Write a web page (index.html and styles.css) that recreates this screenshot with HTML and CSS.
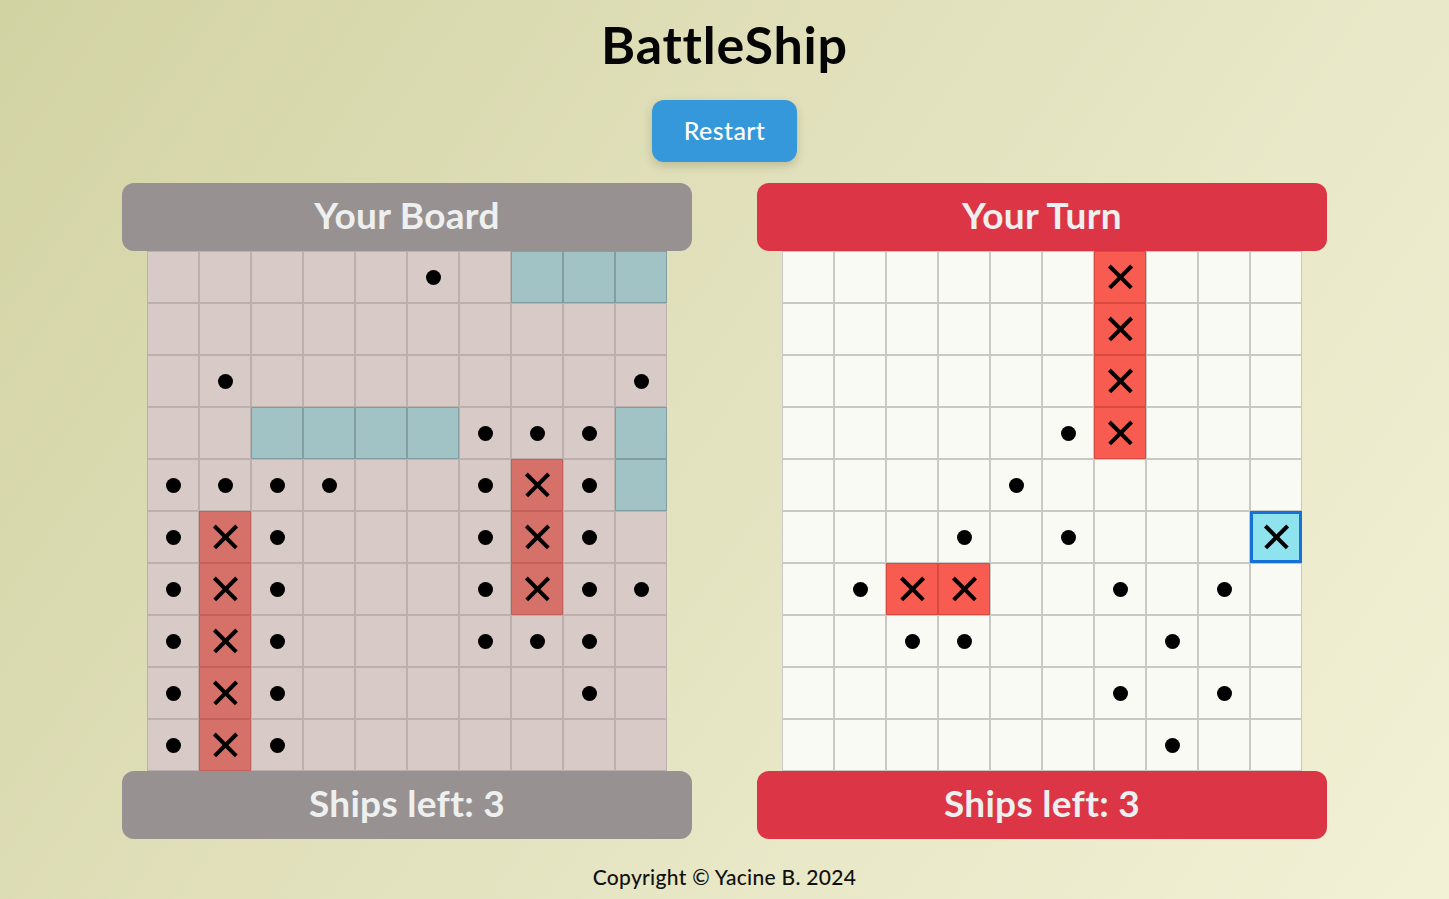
FILE: index.html
```html
<!DOCTYPE html>
<html lang="en">
<head>
<meta charset="utf-8">
<title>BattleShip</title>
<link rel="stylesheet" href="styles.css">
</head>
<body>
<main class="app">
  <h1 class="title">BattleShip</h1>
  <button class="restart">Restart</button>
  <section class="boards">
    <div class="panel panel-mine">
      <div class="bar">Your Board</div>
      <div class="grid">
        <div class="c"></div><div class="c"></div><div class="c"></div><div class="c"></div><div class="c"></div><div class="c d"></div><div class="c"></div><div class="c s"></div><div class="c s"></div><div class="c s"></div>
        <div class="c"></div><div class="c"></div><div class="c"></div><div class="c"></div><div class="c"></div><div class="c"></div><div class="c"></div><div class="c"></div><div class="c"></div><div class="c"></div>
        <div class="c"></div><div class="c d"></div><div class="c"></div><div class="c"></div><div class="c"></div><div class="c"></div><div class="c"></div><div class="c"></div><div class="c"></div><div class="c d"></div>
        <div class="c"></div><div class="c"></div><div class="c s"></div><div class="c s"></div><div class="c s"></div><div class="c s"></div><div class="c d"></div><div class="c d"></div><div class="c d"></div><div class="c s"></div>
        <div class="c d"></div><div class="c d"></div><div class="c d"></div><div class="c d"></div><div class="c"></div><div class="c"></div><div class="c d"></div><div class="c h"></div><div class="c d"></div><div class="c s"></div>
        <div class="c d"></div><div class="c h"></div><div class="c d"></div><div class="c"></div><div class="c"></div><div class="c"></div><div class="c d"></div><div class="c h"></div><div class="c d"></div><div class="c"></div>
        <div class="c d"></div><div class="c h"></div><div class="c d"></div><div class="c"></div><div class="c"></div><div class="c"></div><div class="c d"></div><div class="c h"></div><div class="c d"></div><div class="c d"></div>
        <div class="c d"></div><div class="c h"></div><div class="c d"></div><div class="c"></div><div class="c"></div><div class="c"></div><div class="c d"></div><div class="c d"></div><div class="c d"></div><div class="c"></div>
        <div class="c d"></div><div class="c h"></div><div class="c d"></div><div class="c"></div><div class="c"></div><div class="c"></div><div class="c"></div><div class="c"></div><div class="c d"></div><div class="c"></div>
        <div class="c d"></div><div class="c h"></div><div class="c d"></div><div class="c"></div><div class="c"></div><div class="c"></div><div class="c"></div><div class="c"></div><div class="c"></div><div class="c"></div>
      </div>
      <div class="bar">Ships left: 3</div>
    </div>
    <div class="panel panel-enemy">
      <div class="bar">Your Turn</div>
      <div class="grid">
        <div class="c"></div><div class="c"></div><div class="c"></div><div class="c"></div><div class="c"></div><div class="c"></div><div class="c h"></div><div class="c"></div><div class="c"></div><div class="c"></div>
        <div class="c"></div><div class="c"></div><div class="c"></div><div class="c"></div><div class="c"></div><div class="c"></div><div class="c h"></div><div class="c"></div><div class="c"></div><div class="c"></div>
        <div class="c"></div><div class="c"></div><div class="c"></div><div class="c"></div><div class="c"></div><div class="c"></div><div class="c h"></div><div class="c"></div><div class="c"></div><div class="c"></div>
        <div class="c"></div><div class="c"></div><div class="c"></div><div class="c"></div><div class="c"></div><div class="c d"></div><div class="c h"></div><div class="c"></div><div class="c"></div><div class="c"></div>
        <div class="c"></div><div class="c"></div><div class="c"></div><div class="c"></div><div class="c d"></div><div class="c"></div><div class="c"></div><div class="c"></div><div class="c"></div><div class="c"></div>
        <div class="c"></div><div class="c"></div><div class="c"></div><div class="c d"></div><div class="c"></div><div class="c d"></div><div class="c"></div><div class="c"></div><div class="c"></div><div class="c x sel"></div>
        <div class="c"></div><div class="c d"></div><div class="c h"></div><div class="c h"></div><div class="c"></div><div class="c"></div><div class="c d"></div><div class="c"></div><div class="c d"></div><div class="c"></div>
        <div class="c"></div><div class="c"></div><div class="c d"></div><div class="c d"></div><div class="c"></div><div class="c"></div><div class="c"></div><div class="c d"></div><div class="c"></div><div class="c"></div>
        <div class="c"></div><div class="c"></div><div class="c"></div><div class="c"></div><div class="c"></div><div class="c"></div><div class="c d"></div><div class="c"></div><div class="c d"></div><div class="c"></div>
        <div class="c"></div><div class="c"></div><div class="c"></div><div class="c"></div><div class="c"></div><div class="c"></div><div class="c"></div><div class="c d"></div><div class="c"></div><div class="c"></div>
      </div>
      <div class="bar">Ships left: 3</div>
    </div>
  </section>
  <footer class="copy">Copyright © Yacine B. 2024</footer>
</main>
</body>
</html>
```
FILE: styles.css
```css
html, body {
  margin: 0;
  padding: 0;
}
body {
  width: 1449px;
  height: 899px;
  overflow: hidden;
  background: linear-gradient(125deg, #d2d3a3 0%, #e2e1bd 45%, #f2f1d6 100%);
  font-family: Lato, "Open Sans", sans-serif;
  color: #000;
}
.app {
  display: flex;
  flex-direction: column;
  align-items: center;
}
.title {
  margin: 15px 0 0;
  font-size: 52px;
  line-height: 58px;
  font-weight: 700;
  letter-spacing: 0.8px;
  color: #050505;
}
.restart {
  margin-top: 27px;
  width: 145px;
  height: 62px;
  border: none;
  border-radius: 12px;
  background: #3598db;
  color: #fff;
  font-family: Lato, sans-serif;
  font-size: 25px;
  font-weight: 500;
  letter-spacing: 0.4px;
  padding-bottom: 3px;
  box-shadow: 0 4px 10px rgba(110, 110, 70, 0.3);
}
.boards {
  margin-top: 21px;
  display: flex;
  gap: 65px;
}
.panel {
  width: 570px;
  display: flex;
  flex-direction: column;
  align-items: center;
}
.bar {
  box-sizing: border-box;
  width: 570px;
  height: 68px;
  padding-bottom: 6px;
  border-radius: 12px;
  display: flex;
  align-items: center;
  justify-content: center;
  color: #eef0f0;
  font-size: 37px;
  font-weight: 700;
  letter-spacing: 0.3px;
}
.panel-mine .bar { background: #979291; }
.panel-enemy .bar { background: #dc3546; }
.grid {
  display: grid;
  grid-template-columns: repeat(10, 52px);
  grid-auto-rows: 52px;
}
.c {
  box-sizing: border-box;
  border: 1px solid #bdafad;
  background: #d8cac7;
  position: relative;
}
.panel-enemy .c {
  background: #fafaf5;
  border-color: #c8c8c4;
}
.panel-mine .c.s {
  background: #a1c3c5;
  border-color: #819fa1;
}
.panel-mine .c.h {
  background: #d6716a;
  border-color: #c4605a;
}
.panel-enemy .c.h {
  background: #f85b50;
  border-color: #d64a40;
}
.panel-enemy .c.sel {
  background: #8fe3ee;
  border: 3px solid #1670d6;
}
.c.d::after {
  content: "";
  position: absolute;
  left: 50%;
  top: 50%;
  width: 15px;
  height: 15px;
  margin: -7.5px 0 0 -7.5px;
  border-radius: 50%;
  background: #000;
}
.c.h::before, .c.h::after, .c.x::before, .c.x::after {
  content: "";
  position: absolute;
  left: 50%;
  top: 50%;
  width: 31px;
  height: 3.5px;
  margin: -1.75px 0 0 -15.5px;
  background: #000;
  transform: rotate(45deg);
}
.c.h::after, .c.x::after {
  transform: rotate(-45deg);
}
.copy {
  margin-top: 25px;
  font-size: 21px;
  font-weight: 500;
  letter-spacing: 0.3px;
  color: #111;
}
```
